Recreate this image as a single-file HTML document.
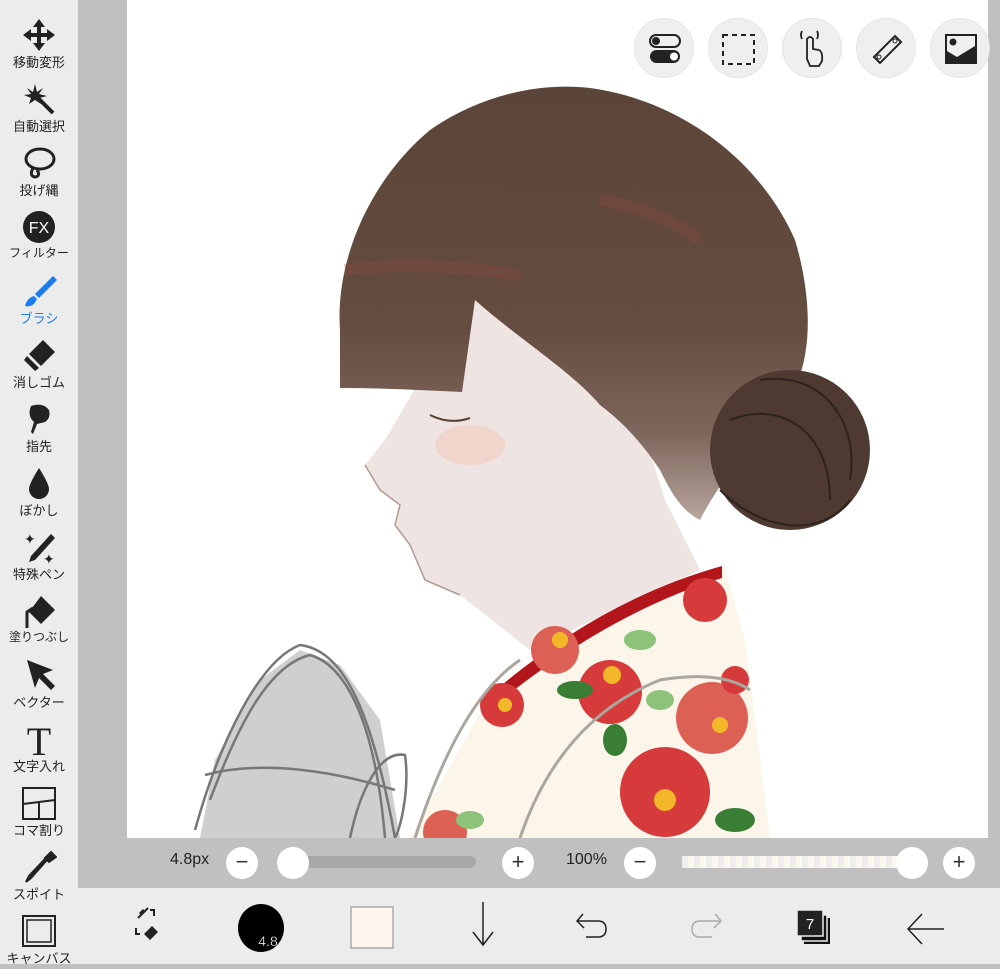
<!DOCTYPE html>
<html><head><meta charset="utf-8"><style>
*{margin:0;padding:0;box-sizing:border-box}
body{width:1000px;height:964px;overflow:hidden;background:#c0c0c0;font-family:"Liberation Sans","Noto Sans CJK JP",sans-serif;position:relative}
#side{position:absolute;left:0;top:0;width:78px;height:964px;background:#ececec}
.t{position:absolute;left:0;width:78px;text-align:center;font-size:13px;color:#222}
.t svg{display:block;margin:0 auto}
#canvas{position:absolute;left:127px;top:0;width:861px;height:838px;background:#fff;overflow:hidden}
#bottom{position:absolute;left:78px;top:888px;width:922px;height:76px;background:#ececec}
.cb{position:absolute;width:60px;height:60px;border-radius:50%;background:#efefef;top:18px;border:1px solid #e4e4e4}
.sb{position:absolute;width:32px;height:32px;border-radius:50%;background:#fff;top:847px;text-align:center;line-height:30px;font-size:22px;color:#333}
.lbl{position:absolute;top:851px;font-size:16px;color:#222}
</style></head><body>
<div id="canvas">
<svg width="861" height="838" viewBox="127 0 861 838">
<defs><linearGradient id="bg" x1="0" y1="0" x2="0" y2="1"><stop offset="0" stop-color="#5b4438"/><stop offset="0.55" stop-color="#654c40"/><stop offset="0.8" stop-color="#7d665c"/><stop offset="1" stop-color="#b8a59d"/></linearGradient></defs>
<path d="M200,838 L215,760 L260,680 L300,650 L340,665 L380,720 L400,838Z" fill="#cfcfcf"/>
<g fill="none" stroke="#777" stroke-width="2.5">
<path d="M195,830 C220,740 260,660 300,645 C340,650 370,700 395,838"/><path d="M210,800 C240,720 270,665 310,655 C345,665 375,720 385,838"/>
<path d="M205,775 C260,760 330,770 395,790"/><path d="M350,838 C360,790 380,750 405,755 C410,790 400,830 395,838"/></g>
<path d="M445,280 L420,380 L385,440 L365,465 L380,490 L400,505 L395,525 L410,545 L425,580 L460,595 L530,650 L700,570 L665,500 L640,420 L600,320Z" fill="#eee4e2"/>
<path d="M365,465 L380,490 L400,505 L395,525 L410,545 L425,580 L460,595" fill="none" stroke="#b59a90" stroke-width="1.5"/>
<ellipse cx="470" cy="445" rx="35" ry="20" fill="#f2cfc5" opacity=".7"/>
<path d="M430,415 Q450,425 470,418" stroke="#5a4034" stroke-width="2" fill="none"/>
<path d="M340,330 C335,260 370,180 430,130 C480,95 540,82 590,88 C680,100 760,160 795,240 C810,290 812,340 800,375 L760,430 C730,470 710,500 700,520 C680,510 670,490 660,470 C640,440 620,420 600,405 C570,370 520,340 475,300 L462,392 C420,390 380,388 340,388Z" fill="url(#bg)"/>
<path d="M345,270 Q420,260 520,275 M600,200 Q660,210 700,240" stroke="#8a4a3e" stroke-width="12" fill="none" opacity=".35"/>
<circle cx="790" cy="450" r="80" fill="#4e3a31"/>
<path d="M760,380 C820,370 860,420 850,480 M730,420 C780,400 830,430 830,500 M720,490 C760,530 820,540 850,500" stroke="#2e221d" stroke-width="2" fill="none"/>
<path d="M410,838 L490,695 Q600,600 725,568 L745,640 L770,838Z" fill="#fbf5ea"/>
<path d="M490,695 Q600,600 722,566 L722,578 Q610,612 495,705Z" fill="#b2151a"/>
<g fill="#d63a3a"><circle cx="610" cy="692" r="32"/><circle cx="555" cy="650" r="24" fill="#dd6055"/><circle cx="502" cy="705" r="22"/><circle cx="665" cy="792" r="45"/><circle cx="712" cy="718" r="36" fill="#dd6055"/><circle cx="705" cy="600" r="22"/><circle cx="445" cy="832" r="22" fill="#dd6055"/><circle cx="735" cy="680" r="14"/></g>
<g fill="#3a7d35"><ellipse cx="640" cy="640" rx="16" ry="10" fill="#8cc27a"/><ellipse cx="575" cy="690" rx="18" ry="9"/><ellipse cx="660" cy="700" rx="14" ry="10" fill="#8cc27a"/><ellipse cx="735" cy="820" rx="20" ry="12"/><ellipse cx="615" cy="740" rx="12" ry="16"/><ellipse cx="470" cy="820" rx="14" ry="9" fill="#8cc27a"/></g>
<g fill="#f2b82a"><circle cx="612" cy="675" r="9"/><circle cx="560" cy="640" r="8"/><circle cx="665" cy="800" r="11"/><circle cx="720" cy="725" r="8"/><circle cx="505" cy="705" r="7"/></g>
<path d="M415,838 Q460,700 520,660 M520,838 Q560,720 660,680 Q720,670 750,690" stroke="#aaa79f" stroke-width="3" fill="none"/>
</svg>
</div>
<div class="cb" style="left:634px"><svg width="60" height="60"><rect x="15" y="16" width="30" height="12" rx="6" fill="none" stroke="#222" stroke-width="2"/><circle cx="21" cy="22" r="4" fill="#222"/><rect x="15" y="31" width="30" height="13" rx="6.5" fill="#222"/><circle cx="39" cy="37.5" r="4" fill="#fff"/></svg></div>
<div class="cb" style="left:708px"><svg width="60" height="60"><rect x="14" y="16" width="31" height="29" fill="none" stroke="#222" stroke-width="2" stroke-dasharray="5 4"/></svg></div>
<div class="cb" style="left:782px"><svg width="60" height="60"><path d="M24,40 L24,20 Q27,16 30,20 L30,30 L36,31 Q40,33 39,42 L36,47 L27,47 Z M19,20 Q17,16 19,12 M34,20 Q36,16 34,12" fill="none" stroke="#222" stroke-width="1.8"/></svg></div>
<div class="cb" style="left:856px"><svg width="60" height="60"><path d="M17,38 L38,17 L44,23 L23,44Z" fill="none" stroke="#222" stroke-width="2"/><circle cx="22" cy="38" r="2" fill="none" stroke="#222"/><circle cx="38" cy="22" r="2" fill="none" stroke="#222"/></svg></div>
<div class="cb" style="left:930px"><svg width="60" height="60"><rect x="15" y="16" width="30" height="28" fill="none" stroke="#222" stroke-width="2"/><circle cx="22" cy="23" r="3.5" fill="#222"/><path d="M16,43 L16,32 L26,38 L44,27 L44,43Z" fill="#222"/></svg></div>
<div id="side">
<div class="t" style="top:18px"><svg width="36" height="34"><path d="M18,1 L24,9 L20,9 L20,15 L26,15 L26,11 L34,17 L26,23 L26,19 L20,19 L20,25 L24,25 L18,33 L12,25 L16,25 L16,19 L10,19 L10,23 L2,17 L10,11 L10,15 L16,15 L16,9 L12,9Z" fill="#222"/></svg>移動変形</div>
<div class="t" style="top:82px"><svg width="36" height="34"><path d="M17,16 L32,31" stroke="#222" stroke-width="4"/><path d="M14,2 L16,10 L22,6 L18,12 L26,14 L18,16 L20,22 L14,18 L8,22 L10,16 L3,13 L10,12 L6,6 L12,10Z" fill="#222"/></svg>自動選択</div>
<div class="t" style="top:146px"><svg width="36" height="34"><ellipse cx="19" cy="13" rx="14" ry="10" fill="none" stroke="#222" stroke-width="3"/><path d="M12,22 Q8,30 14,31 Q20,30 16,24" fill="none" stroke="#222" stroke-width="3"/></svg>投げ縄</div>
<div class="t" style="top:210px"><svg width="36" height="34"><circle cx="18" cy="17" r="16" fill="#222"/><text x="18" y="23" font-size="16" fill="#fff" text-anchor="middle" font-family="Liberation Sans">FX</text></svg><span style="font-size:12px">フィルター</span></div>
<div class="t" style="top:274px;color:#1a7cf0"><svg width="36" height="34"><path d="M32,2 L36,6 L18,24 L14,20Z M13,22 L16,25 Q12,34 4,32 Q6,24 13,22Z" fill="#1a7cf0"/></svg>ブラシ</div>
<div class="t" style="top:338px"><svg width="36" height="34"><path d="M22,2 L34,14 L20,28 L8,16Z" fill="#222"/><path d="M6,18 L18,30 L14,33 L3,22Z" fill="#222"/></svg>消しゴム</div>
<div class="t" style="top:402px"><svg width="36" height="34"><path d="M10,4 Q22,0 28,8 Q30,16 24,20 L16,22 L12,32 L10,30 L13,20 Q6,14 10,4Z" fill="#222"/></svg>指先</div>
<div class="t" style="top:466px"><svg width="36" height="34"><path d="M18,2 Q28,18 28,23 A10,10 0 0 1 8,23 Q8,18 18,2Z" fill="#222"/></svg>ぼかし</div>
<div class="t" style="top:530px"><svg width="36" height="34"><path d="M30,4 L34,8 L14,30 L8,32 L10,26Z" fill="#222"/><text x="3" y="14" font-size="14" fill="#222">✦</text><text x="22" y="34" font-size="14" fill="#222">✦</text></svg>特殊ペン</div>
<div class="t" style="top:594px"><svg width="36" height="34"><path d="M20,2 L34,16 L20,30 L8,18Z" fill="#222"/><path d="M12,14 L6,18 L6,34" stroke="#222" stroke-width="3" fill="none"/></svg><span style="font-size:12px">塗りつぶし</span></div>
<div class="t" style="top:658px"><svg width="36" height="34"><path d="M6,2 L32,12 L22,16 L34,28 L30,32 L18,20 L14,30Z" fill="#222"/></svg>ベクター</div>
<div class="t" style="top:722px"><svg width="36" height="34"><text x="18" y="33" font-size="40" fill="#222" text-anchor="middle" font-family="Liberation Serif">T</text></svg>文字入れ</div>
<div class="t" style="top:786px"><svg width="36" height="34"><path d="M2,2 H34 V33 H2Z M2,18 L34,14 M18,16 V33" fill="none" stroke="#222" stroke-width="2"/></svg>コマ割り</div>
<div class="t" style="top:850px"><svg width="36" height="34"><path d="M30,2 L35,7 L28,12 L24,8Z M26,10 L10,28 L5,32 L8,26 L24,9Z" fill="#222" stroke="#222" stroke-width="2"/></svg>スポイト</div>
<div class="t" style="top:914px"><svg width="36" height="34"><rect x="2" y="2" width="32" height="30" fill="none" stroke="#222" stroke-width="2"/><rect x="6" y="6" width="24" height="22" fill="none" stroke="#222" stroke-width="1.5"/></svg>キャンバス</div>
</div>
<div class="lbl" style="left:170px">4.8px</div>
<div class="sb" style="left:226px">−</div>
<div style="position:absolute;left:290px;top:856px;width:186px;height:12px;border-radius:6px;background:#a8a8a8"></div>
<div class="sb" style="left:277px"></div>
<div class="sb" style="left:502px">+</div>
<div class="lbl" style="left:566px">100%</div>
<div class="sb" style="left:624px">−</div>
<div style="position:absolute;left:682px;top:856px;width:230px;height:12px;background:repeating-linear-gradient(90deg,#eee 0 6px,#fdf6ec 6px 12px)"></div>
<div class="sb" style="left:896px"></div>
<div class="sb" style="left:943px">+</div>
<div id="bottom">
<svg width="922" height="76">
<g stroke="#222" stroke-width="2" fill="none"><path d="M60,30 L70,20 M72,22 H76 V28 M58,40 V46 H62"/></g><path d="M74,38 L80,44 L72,52 L66,46Z" fill="#222"/><path d="M62,26 L66,22" stroke="#222" stroke-width="3"/>
<ellipse cx="183" cy="40" rx="23" ry="24" fill="#000"/><text x="190" y="58" font-size="14" fill="#fff" stroke="#000" stroke-width=".3" text-anchor="middle">4.8</text>
<rect x="273" y="19" width="42" height="41" fill="#fdf6ec" stroke="#888"/>
<path d="M405,14 V56 M395,44 L405,57 L415,44" stroke="#222" stroke-width="1.5" fill="none"/>
<path d="M505,26 L499,33 L506,40 M499,33 H520 Q528,33 528,41 Q528,49 520,49 H508" stroke="#222" stroke-width="1.5" fill="none"/>
<path d="M637,26 L643,33 L636,40 M643,33 H622 Q614,33 614,41 Q614,49 622,49 H634" stroke="#aaa" stroke-width="1.5" fill="none"/>
<rect x="726" y="30" width="26" height="26" fill="#111"/><rect x="723" y="27" width="26" height="26" fill="#111" stroke="#ececec" stroke-width="1.5"/><rect x="719" y="22" width="26" height="26" fill="#222" stroke="#ececec" stroke-width="1.5"/>
<text x="732" y="41" font-size="15" fill="#fff" text-anchor="middle">7</text>
<path d="M844,26 L830,41 L844,56 M830,41 H866" stroke="#222" stroke-width="1.5" fill="none"/>
</svg>
</div>
</body></html>
